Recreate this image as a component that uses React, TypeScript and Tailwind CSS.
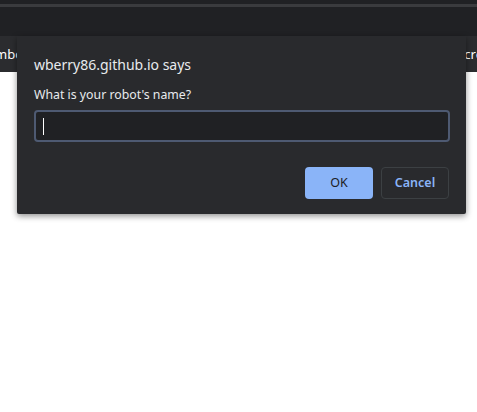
import React from "react";

export default function App() {
  const font = { fontFamily: '"Segoe UI", "Noto Sans", "Open Sans", sans-serif' };
  return (
    <div className="relative w-[477px] h-[412px] bg-white overflow-hidden" style={font}>
      <div className="h-[4px] bg-[#202124]" />
      <div className="h-[3px] bg-[#3a3b3e]" />
      <div className="h-[29px] bg-[#202124]" />
      <div className="h-[36px] bg-[#2b2c2f] flex items-center justify-between text-[13px] text-white overflow-hidden">
        <span className="-ml-[5px] pt-[1px]">mbo</span>
        <span className="-mr-[6px] pt-[1px]">cre</span>
      </div>
      <div className="absolute left-[17px] top-[36px] w-[449px] h-[178px] bg-[#292a2d] shadow-[0_2px_6px_rgba(0,0,0,0.45)] rounded-b-[2px] px-[17px] pt-[19px]">
        <div className="text-[14px] leading-[20px] text-[#e8eaed]">wberry86.github.io says</div>
        <div className="mt-[11px] text-[12.3px] leading-[18px] text-[#e8eaed]">What is your robot's name?</div>
        <div className="mt-[6px] h-[32px] w-[416px] rounded-[4px] border-2 border-[#4e5a72] bg-[#202124] flex items-center pl-[7px]">
          <div className="w-[1px] h-[17px] bg-white" />
        </div>
        <div className="mt-[25px] flex justify-end gap-[8px]">
          <button className="w-[68px] h-[32px] rounded-[4px] bg-[#8ab4f8] text-[12.5px] text-[#202124]">OK</button>
          <button className="w-[68px] h-[32px] rounded-[4px] border border-[#3c4043] text-[12.5px] font-semibold text-[#8ab4f8]">Cancel</button>
        </div>
      </div>
    </div>
  );
}
